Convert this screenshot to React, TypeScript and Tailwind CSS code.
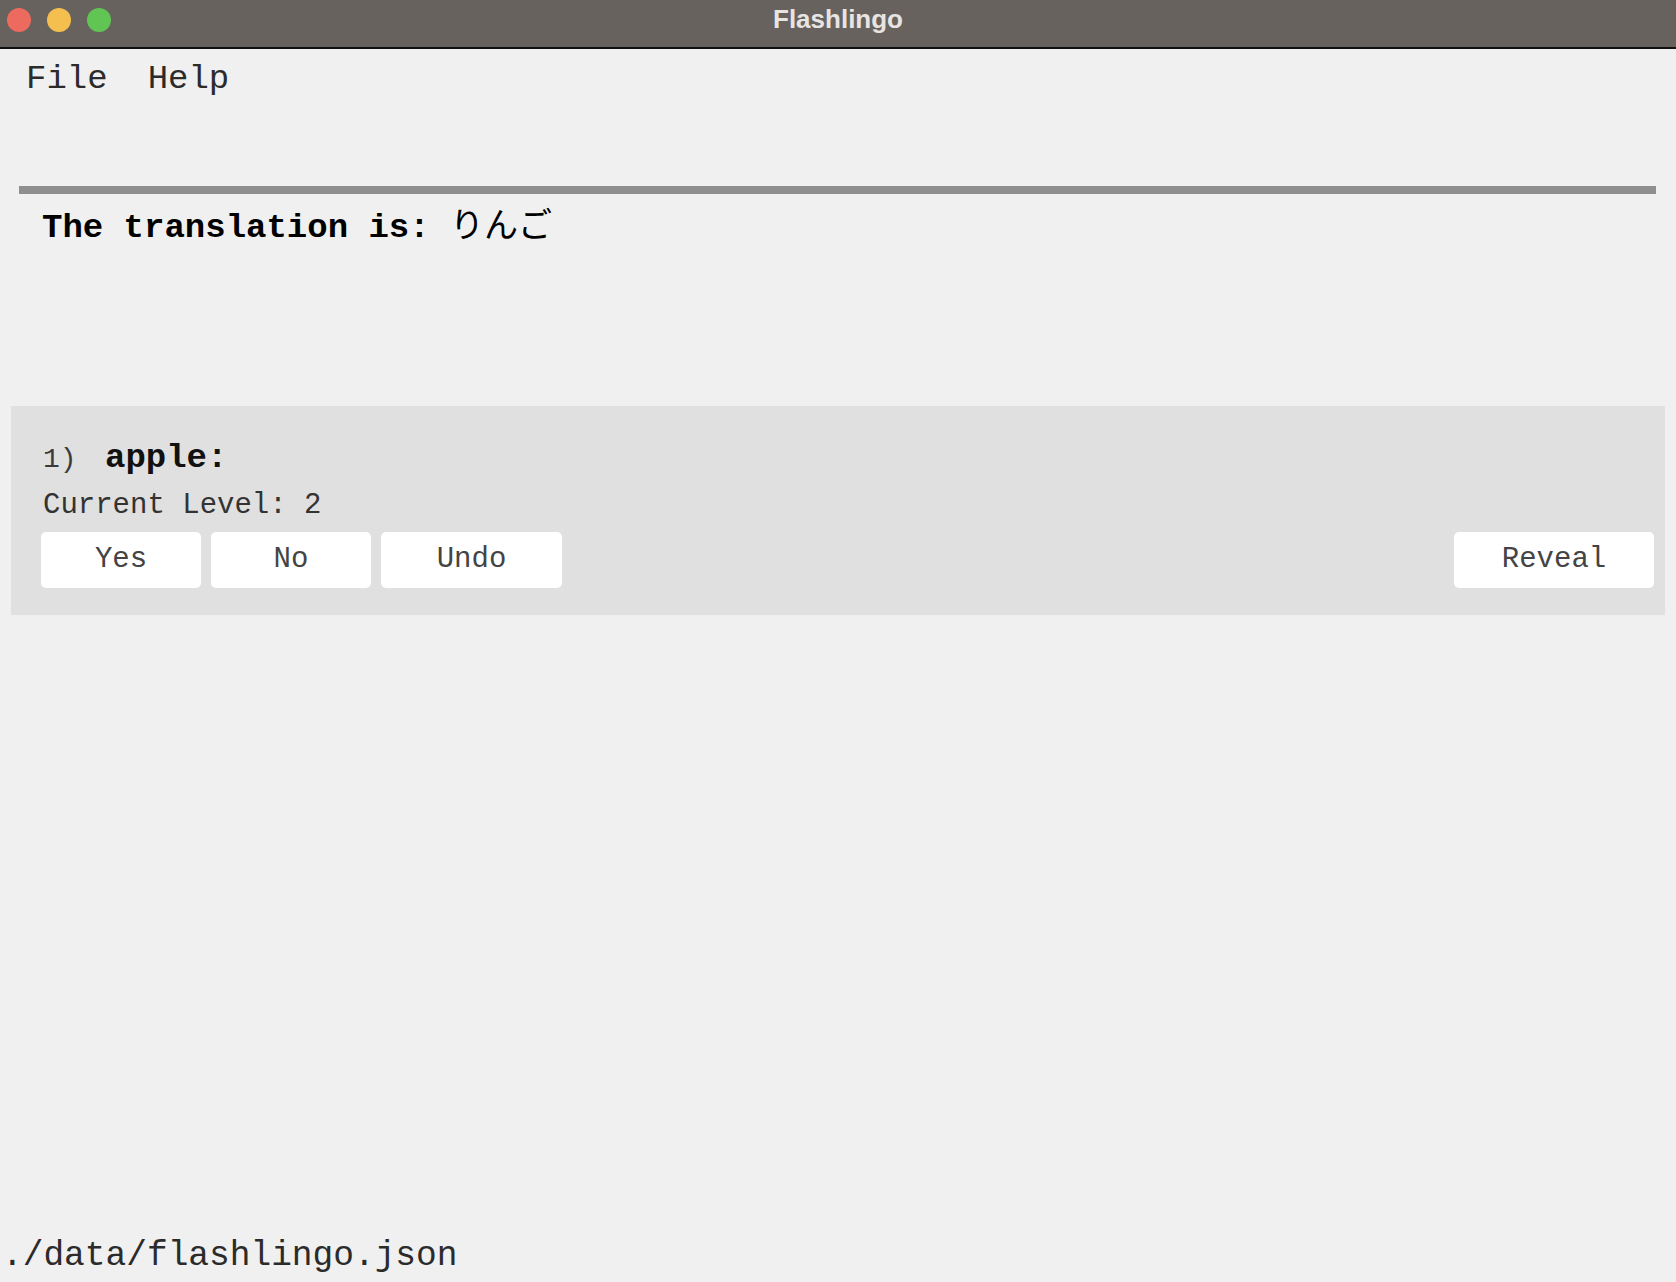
import React from 'react';

const mono = "font-['Liberation_Mono','Courier_New','Noto_Sans_CJK_JP',monospace]";

const TitleBar = () => (
  <div className="h-[49px] shrink-0 bg-[#67625e] border-b-2 border-[#111] grid grid-cols-[1fr_auto_1fr] items-center">
    <div className="flex items-center gap-[16px] pl-[7px] pb-[8px]">
      <span className="w-[24px] h-[24px] rounded-full bg-[#ec6a5e]" />
      <span className="w-[24px] h-[24px] rounded-full bg-[#f4bf4f]" />
      <span className="w-[24px] h-[24px] rounded-full bg-[#61c554]" />
    </div>
    <div className="font-['Liberation_Sans',Arial,sans-serif] font-bold text-[26px] text-[#e8e4e2] pb-[8px]">
      Flashlingo
    </div>
    <div />
  </div>
);

const CardButton = ({ label, width }: { label: string; width: string }) => (
  <button className={`${width} h-[56px] bg-white rounded-[5px] text-[29px] text-[#444] ${mono}`}>
    {label}
  </button>
);

export default function App() {
  return (
    <div className={`w-full h-[1282px] bg-[#f0f0f0] flex flex-col ${mono}`}>
      <TitleBar />

      {/* MENU */}
      <div className="flex gap-[40px] pl-[26px] pt-[10px] text-[34px] leading-[40px] text-[#2b2b2b]">
        <span>File</span>
        <span>Help</span>
      </div>

      {/* TRANSLATION */}
      <div className="mt-[87px] ml-[19px] mr-[20px] h-[8px] bg-[#8f8f8f]" />
      <div className="pl-[42px] pt-[14px] text-[34px] leading-[40px] font-bold text-black">
        The translation is: <span className="font-normal">りんご</span>
      </div>

      {/* CARD */}
      <div className="mt-[158px] ml-[11px] mr-[11px] bg-[#e0e0e0] pt-[32px] pb-[27px] pl-[30px] pr-[11px]">
        <div className="flex items-baseline leading-[40px] pl-[2px]">
          <span className="text-[28px] text-[#3a3a3a] w-[62px]">1)</span>
          <span className="text-[34px] font-bold text-[#111]">apple:</span>
        </div>
        <div className="mt-[9px] pl-[2px] text-[29px] leading-[34px] text-[#333]">Current Level: 2</div>
        <div className="mt-[9px] flex items-center">
          <div className="flex gap-[10px]">
            <CardButton label="Yes" width="w-[160px]" />
            <CardButton label="No" width="w-[160px]" />
            <CardButton label="Undo" width="w-[181px]" />
          </div>
          <div className="flex-1" />
          <CardButton label="Reveal" width="w-[200px]" />
        </div>
      </div>

      <div className="flex-1" />

      {/* STATUS */}
      <div className="pl-[2px] pb-[6px] text-[34.5px] leading-[40px] text-[#2b2b2b]">./data/flashlingo.json</div>
    </div>
  );
}
